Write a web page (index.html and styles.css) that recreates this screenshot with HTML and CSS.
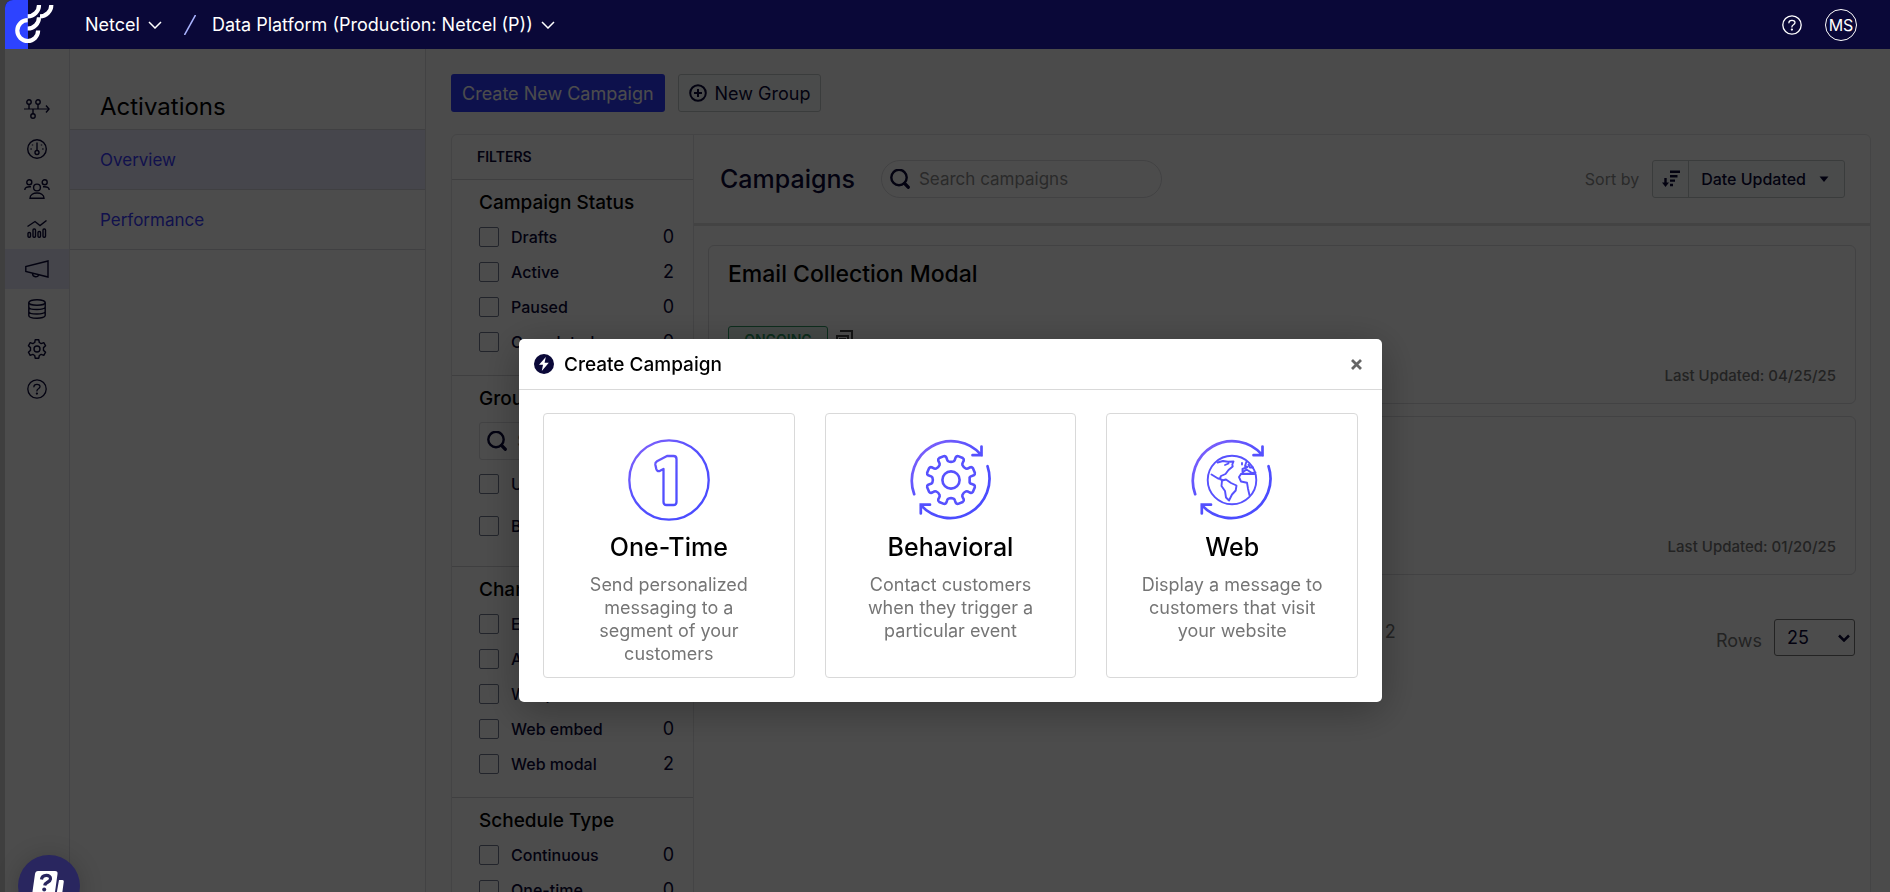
FILE: index.html
```
<!DOCTYPE html>
<html lang="en">
<head>
<meta charset="utf-8">
<title>Campaigns</title>
<link rel="stylesheet" href="styles.css">
</head>
<body>
<svg class="defs" aria-hidden="true">
  <defs>
    <linearGradient id="violet" gradientUnits="userSpaceOnUse" x1="8" y1="8" x2="58" y2="66"><stop offset="0" stop-color="#7d60fb"/><stop offset=".5" stop-color="#5751fe"/><stop offset="1" stop-color="#4b4cff"/></linearGradient>
    <symbol id="search" viewBox="0 0 20 20"><g fill="none" stroke="currentColor" stroke-linecap="round"><circle cx="9" cy="8.500" r="7.700" stroke-width="2.400"/><path d="M14.800 14.600l3.400 3.600" stroke-width="3.400"/></g></symbol>
    <symbol id="help" viewBox="0 0 20 20"><g fill="none" stroke="currentColor" stroke-width="1.300" stroke-linecap="round" stroke-linejoin="round"><circle cx="10" cy="10" r="9.200"/><path d="M6.900 7.800C6.900 4.600 13 4.500 13 7.600c0 2.300-3.100 1.900-3.100 4.300"/><circle cx="9.900" cy="14.600" r=".5"/></g></symbol>
    <symbol id="cycle" viewBox="0 0 82 82"><g fill="none" stroke="url(#violet)" stroke-width="2.700" stroke-linecap="round" stroke-linejoin="miter"><path d="M4.200 55.200A39.500 39.500 0 0 1 71.500 16.200M71.500 7.500v8.700H62.500"/><path d="M77.500 27.200A39.500 39.500 0 0 1 10.800 66.200M10.800 74.500v-8.800H20"/></g></symbol>
  </defs>
</svg>

<div class="app">
  <header class="topbar">
    <a class="logo" href="#" aria-label="Home">
      <svg width="49" height="49" viewBox="0 0 49 49"><path fill="#2d43ff" d="M0 0h23v49H0z"/><g fill="none" stroke="#fff" stroke-width="4.200"><path d="M34 5A11.300 11.300 0 0 1 22.700 16.300M46.300 5A11.300 11.300 0 0 1 35 16.300M34 17.200A11.300 11.300 0 0 1 22.700 28.500"/><path d="M22.700 20.200A10.400 10.400 0 1 0 33.100 30.600"/></g></svg>
    </a>
    <button class="crumb" type="button">Netcel <svg width="14" height="8" viewBox="0 0 14 8"><path d="M1 1l6 6 6-6"/></svg></button>
    <svg class="slash" width="12" height="20" viewBox="0 0 12 20"><path d="M11.500 0L.5 20"/></svg>
    <button class="crumb" type="button">Data Platform (Production: Netcel (P)) <svg width="14" height="8" viewBox="0 0 14 8"><path d="M1 1l6 6 6-6"/></svg></button>
    <button class="top-help" type="button" aria-label="Help"><svg width="20" height="20"><use href="#help"/></svg></button>
    <button class="avatar" type="button">MS</button>
  </header>

  <div class="body">
    <nav class="rail" aria-label="Main">
      <a href="#" aria-label="Journeys"><svg width="26" height="20" viewBox="0 0 26 20"><path d="M0 10h25" stroke-width="1"/><path d="M22 6.500l3 3.500-3 3.500M5 5v5M14 5v5M9 10v5"/><circle cx="5" cy="3" r="2.200"/><circle cx="14" cy="3" r="2.200"/><circle cx="9" cy="17" r="2.200"/></svg></a>
      <a href="#" aria-label="Dashboard"><svg width="20" height="20" viewBox="0 0 20 20"><circle cx="10" cy="10" r="9.300"/><path d="M10 3.500v8M5.500 5.500v1M14.500 5.500v1M3.500 10h1.200M15.300 10h1.200"/><circle cx="10" cy="13.500" r="2"/></svg></a>
      <a href="#" aria-label="Customers"><svg width="26" height="20" viewBox="0 0 26 20"><circle cx="13" cy="8.500" r="3.400"/><circle cx="5.300" cy="3.300" r="2.500"/><circle cx="20.700" cy="3.300" r="2.500"/><path d="M6 19.200c0-7 14-7 14 0zM.8 11c0-2.500 2-3.500 6.200-3.200M25.200 11c0-2.500-2-3.500-6.200-3.200"/></svg></a>
      <a href="#" aria-label="Insights"><svg width="20" height="18" viewBox="0 0 20 18"><path d="M.5 6.500L8 1.500l5 4L19.500.5"/><rect x="1" y="12.500" width="2.500" height="4.800" rx="1"/><rect x="6" y="9" width="2.500" height="8.300" rx="1"/><rect x="11" y="11.500" width="2.500" height="5.800" rx="1"/><rect x="16" y="9" width="2.500" height="8.300" rx="1"/></svg></a>
      <a class="is-active" href="#" aria-label="Activations"><svg width="24" height="18" viewBox="0 0 24 18"><path d="M.8 6.500v5L23 17V1zM7.500 13.500c0 4 5.800 4 6 1.500"/></svg></a>
      <a href="#" aria-label="Data"><svg width="18" height="20" viewBox="0 0 18 20"><ellipse cx="9" cy="3.500" rx="8.200" ry="2.800"/><path d="M.8 3.500v13c0 3.600 16.400 3.600 16.400 0v-13M.8 8c0 3.400 16.400 3.400 16.400 0M.8 12.500c0 3.400 16.400 3.400 16.400 0"/></svg></a>
      <a href="#" aria-label="Settings"><svg width="20" height="20" viewBox="0 0 20 20"><circle cx="10" cy="10" r="3"/><path stroke-linejoin="round" d="M8.200.8h3.600l.5 2.700 1.900 1.100 2.600-.9 1.800 3.100-2.100 1.800v2.800l2.100 1.800-1.800 3.100-2.600-.9-1.900 1.100-.5 2.700H8.200l-.5-2.700-1.900-1.100-2.600.9-1.800-3.100 2.100-1.800V8.600L1.400 6.800l1.800-3.100 2.600.9 1.900-1.100z"/></svg></a>
      <a href="#" aria-label="Support"><svg width="20" height="20"><use href="#help"/></svg></a>
    </nav>

    <aside class="subnav">
      <h1>Activations</h1>
      <a class="is-active" href="#">Overview</a>
      <a href="#">Performance</a>
    </aside>

    <main class="content">
      <div class="actions">
        <button class="btn-primary" type="button">Create New Campaign</button>
        <button class="btn" type="button"><svg width="18" height="18" viewBox="0 0 18 18"><g fill="none" stroke="currentColor" stroke-width="2"><circle cx="9" cy="9" r="7.800"/><path d="M9 5v8M5 9h8"/></g></svg>New Group</button>
      </div>
      <div class="board">
        <div class="filters">
          <h2>FILTERS</h2>
          <section>
            <h3>Campaign Status</h3>
            <label><input type="checkbox"><span>Drafts</span><b>0</b></label>
            <label><input type="checkbox"><span>Active</span><b>2</b></label>
            <label><input type="checkbox"><span>Paused</span><b>0</b></label>
            <label><input type="checkbox"><span>Completed</span><b>0</b></label>
          </section>
          <section class="groups">
            <h3>Groups</h3>
            <div class="group-search"><svg width="20" height="20"><use href="#search"/></svg><input type="search" placeholder="Search groups" aria-label="Search groups"></div>
            <label><input type="checkbox"><span>Ungrouped</span><b>2</b></label>
            <label><input type="checkbox"><span>B2B</span><b>0</b></label>
          </section>
          <section>
            <h3>Channel</h3>
            <label><input type="checkbox"><span>Email</span><b>0</b></label>
            <label><input type="checkbox"><span>API</span><b>0</b></label>
            <label><input type="checkbox"><span>Webpush</span><b>0</b></label>
            <label><input type="checkbox"><span>Web embed</span><b>0</b></label>
            <label><input type="checkbox"><span>Web modal</span><b>2</b></label>
          </section>
          <section>
            <h3>Schedule Type</h3>
            <label><input type="checkbox"><span>Continuous</span><b>0</b></label>
            <label><input type="checkbox"><span>One-time</span><b>0</b></label>
          </section>
        </div>
        <div class="campaigns">
          <div class="toolbar">
            <h2>Campaigns</h2>
            <div class="search"><svg width="20" height="20"><use href="#search"/></svg><input type="search" placeholder="Search campaigns" aria-label="Search campaigns"></div>
            <span class="sort-label">Sort by</span>
            <div class="sort">
              <button type="button" aria-label="Sort descending"><svg width="18" height="18" viewBox="0 0 18 18"><g fill="none" stroke="currentColor" stroke-width="2.400"><path d="M3.500 8v7M8 1.800h10M8 6.200h7.500M8 10.600h5M8 15h3"/></g><path fill="currentColor" d="M0 12.500h7L3.500 17z"/></svg></button>
              <button type="button">Date Updated <svg width="10" height="6" viewBox="0 0 10 6"><path fill="currentColor" d="M.5.500h9L5 6z"/></svg></button>
            </div>
          </div>
          <div class="list">
            <article>
              <h3>Email Collection Modal</h3>
              <div class="state"><span class="badge">ONGOING</span><svg width="18" height="18" viewBox="0 0 18 18"><g fill="none" stroke="currentColor" stroke-width="2"><path d="M4 1h12v12M1 6h11v11H1z"/><path d="M3 9h7"/></g></svg></div>
              <p>Last Updated: 04/25/25</p>
            </article>
            <article>
              <h3>Welcome Modal</h3>
              <p>Last Updated: 01/20/25</p>
            </article>
            <footer class="pager">
              <span class="range">Showing 1 - 2 of 2</span>
              <label for="rows">Rows</label>
              <div class="rows"><select id="rows"><option>25</option></select><svg width="12" height="8" viewBox="0 0 12 8"><path d="M1 1.500l5 5 5-5"/></svg></div>
            </footer>
          </div>
        </div>
      </div>
    </main>
  </div>
</div>

<div class="overlay">
  <div class="modal" role="dialog" aria-labelledby="modal-title">
    <div class="modal-head">
      <svg width="20" height="20" viewBox="0 0 20 20"><circle cx="10" cy="10" r="10" fill="#0a0838"/><path fill="#fff" d="M11.800 3L5 10.800h4L7.800 17l7-8.200h-4.200z"/></svg>
      <h2 id="modal-title">Create Campaign</h2>
      <button type="button" aria-label="Close"><svg width="11" height="11" viewBox="0 0 11 11"><path d="M1 1l9 9M10 1l-9 9" stroke="#666" stroke-width="2.800"/></svg></button>
    </div>
    <div class="choices">
      <button type="button">
        <svg width="82" height="82" viewBox="0 0 82 82" fill="none" stroke="url(#violet)" stroke-width="2.300"><circle cx="41" cy="41" r="39.700"/><path stroke-linejoin="round" d="M39 17h6.500q3 0 3 3v43q0 3-3 3h-7q-3 0-3-3V30l-3.500 1.800q-3 1-3.700-1.800l-1-4.500q-.3-2 1.700-3.200z"/></svg>
        <strong>One-Time</strong>
        <span>Send personalized messaging to a segment of your customers</span>
      </button>
      <button type="button">
        <svg width="82" height="82" viewBox="0 0 82 82"><use href="#cycle"/><g fill="none" stroke="#5751fe" stroke-width="2.600" stroke-linejoin="round"><circle cx="41" cy="41" r="8.600"/><path id="cog" d=""/></g></svg>
        <strong>Behavioral</strong>
        <span>Contact customers when they trigger a particular event</span>
      </button>
      <button type="button">
        <svg width="82" height="82" viewBox="0 0 82 82"><use href="#cycle"/><g fill="none" stroke="#5751fe" stroke-width="1.900" stroke-linejoin="round" stroke-linecap="round"><circle cx="41" cy="41" r="24.300"/><path d="M26.500 23.500l5.500-1.500 5 .8 5.500-.3-1.200 3 .4 2-4.200 3.500-3 4-4.500 2-1.300 3 2.500 1M20.500 35.500l6.500 4 2.700.5 1.300 1.500M34 26l3.500-1.500"/><path d="M31 41.500l4-1 5 3.500 5.500 2.500-.8 5-3.700 4-3 6-3-3-1-6.500-3.500-5z"/><path d="M51 24v1.500M55.500 22.500l-1.500 4.500 2.500 1-5 2v3.500l4-3 5.500 3.500 3.500-.5M50 35l7-.3 6.500.3M50 35l-2 3 2 4.500 6 1.200 1 6 1.500 6.500M57.500 25.500l1.500 3h3"/></g></svg>
        <strong>Web</strong>
        <span>Display a message to customers that visit your website</span>
      </button>
    </div>
  </div>
</div>

<button class="chat" type="button" aria-label="Support chat"><svg width="34" height="34" viewBox="0 0 34 34"><path fill="#fff" d="M6 1h17q3 0 2.500 3L23 22q-.5 3-3.500 3H4q-4 0-3.500-3.500L3 4q.5-3 3-3zM27 10h3.500q1.500 0 1.300 1.500L29 32l-8-5h3z"/><path d="M9.500 9.500C10 4 19 4 18.500 9c-.4 3.500-5.500 3-5.800 6.500" fill="none" stroke="#29265f" stroke-width="3.200"/><circle cx="12.200" cy="19.500" r="2" fill="#29265f"/></svg></button>
<script src="icons.js"></script>
</body>
</html>
```
FILE: icons.js
```
// Eight-toothed cog outline with rounded shoulders.
const teeth = 8;
const step = (Math.PI * 2) / teeth;
const at = (radius, angle) =>
  `${(41 + radius * Math.cos(angle)).toFixed(2)} ${(41 + radius * Math.sin(angle)).toFixed(2)}`;
let outline = "";
for (let i = 0; i < teeth; i++) {
  const a = (i + 0.5) * step;
  outline += `${i ? "Q" + at(17.6, a - step / 2) + " " : "M"}${at(18.8, a - 0.26)}Q${at(19.8, a - 0.2)} ${at(21.2, a - 0.2)}`;
  outline += `L${at(23.2, a - 0.19)}Q${at(24.8, a - 0.17)} ${at(24.9, a - 0.1)}`;
  outline += `L${at(24.9, a + 0.1)}Q${at(24.8, a + 0.17)} ${at(23.2, a + 0.19)}`;
  outline += `L${at(21.2, a + 0.2)}Q${at(19.8, a + 0.2)} ${at(18.8, a + 0.26)}`;
}
document.getElementById("cog").setAttribute("d", outline + "Z");
```
FILE: styles.css
```
* { box-sizing: border-box; }
body { margin: 0; height: 100vh; overflow: hidden; background: #0a0838; font-family: Inter, "Liberation Sans", sans-serif; color: #0a0838; }
h1, h2, h3, p { margin: 0; font-weight: 500; }
a { text-decoration: none; }
button { font: inherit; color: inherit; padding: 0; background: none; border: 0; }
.defs { position: absolute; width: 0; height: 0; }

.app { display: flex; flex-direction: column; height: 100vh; border-left: 5px solid #3f3f3f; background: #3f3f3f; }
.topbar { display: flex; align-items: center; flex: none; height: 49px; padding-right: 33px; background: #0a0838; color: #fff; border-radius: 8px 0 0 0; overflow: hidden; }
.logo { display: flex; margin-right: 31px; }
.crumb { display: flex; align-items: center; gap: 8px; font-size: 18px; }
.crumb path { fill: none; stroke: #fff; stroke-width: 1.5; }
.slash { margin: 0 16px 0 22px; }
.slash path { stroke: #aab4ff; stroke-width: 1.5; }
.top-help { display: flex; margin-left: auto; }
.avatar { width: 32px; height: 32px; margin-left: 23px; border: 1px solid #fff; border-radius: 50%; font-size: 16px; }

.body { display: flex; flex: 1; min-height: 0; background: #fff; }
.rail { flex: none; width: 65px; padding-top: 40px; border-right: 1px solid #e2e2e6; }
.rail a { display: flex; align-items: center; justify-content: center; height: 40px; color: #0a0838; }
.rail a.is-active { background: #e6e8fa; }
.rail svg { fill: none; stroke: currentColor; stroke-width: 1.4; }
.subnav { flex: none; width: 356px; border-right: 1px solid #dddde2; }
.subnav h1 { padding: 41px 30px 6px; font-size: 24px; line-height: 33px; font-weight: 400; color: #000; }
.subnav a { display: flex; align-items: center; height: 60px; padding: 0 30px; border-top: 1px solid #d5d5dc; font-size: 17px; color: #3a3bff; }
.subnav a:last-child { height: 61px; border-bottom: 1px solid #d5d5dc; }
.subnav a.is-active { background: #ebe9ff; }

.content { flex: 1; min-width: 0; padding: 25px 19px 0 25px; background: #fcfcfc; }
.actions { display: flex; gap: 13px; height: 38px; margin-bottom: 22px; font-size: 18px; }
.btn-primary { padding: 0 11px; border-radius: 3px; background: #2d3aff; color: #fff; }
.btn { display: flex; align-items: center; gap: 8px; padding: 0 10px; border: 1px solid #c4c9c9; border-radius: 3px; background: #f8fcfc; }
.board { display: flex; border: 1px solid #e4e4e6; border-radius: 6px; background: #fff; }

.filters { flex: none; width: 242px; border-right: 1px solid #e4e4e6; }
.filters h2 { padding: 0 25px; font-size: 14px; line-height: 44px; font-weight: 600; }
.filters section { padding: 11px 19px 16px 27px; border-top: 1px solid #d2d2d6; }
.filters h3 { margin-bottom: 4px; font-size: 19px; line-height: 24px; color: #000; }
.filters label { display: flex; align-items: center; height: 35px; font-size: 16px; font-weight: 500; }
.filters label span { flex: 1; margin-left: 12px; }
.filters b { font-size: 18px; font-weight: 400; }
.filters input[type="checkbox"] { appearance: none; width: 20px; height: 20px; margin: 0; border: 1px solid #747b90; border-radius: 2px; }
.groups.groups { padding-bottom: 19px; }
.groups h3 { margin-bottom: 11px; }
.groups label { height: 42px; }
.group-search { display: flex; align-items: center; gap: 10px; height: 38px; margin-bottom: 3px; padding-left: 7px; border: 1px solid #dcdce0; border-radius: 3px; }
input[type="search"] { flex: 1; min-width: 0; padding: 0; border: 0; outline: 0; background: none; font: inherit; font-size: 17px; }
input::placeholder { color: #8e8e8e; }

.campaigns { flex: 1; min-width: 0; }
.toolbar { display: flex; align-items: center; height: 91px; padding: 0 25px 0 26px; border-bottom: 3px solid #e0e0e0; }
.toolbar h2 { font-size: 25px; line-height: 32px; }
.search { display: flex; align-items: center; gap: 9px; width: 281px; height: 38px; margin-left: 26px; padding: 0 16px 0 8px; border: 1px solid #dcdce0; border-radius: 19px; }
.sort-label { margin-left: auto; margin-right: 13px; font-size: 16px; color: #8e8e8e; }
.sort { display: flex; height: 38px; border: 1px solid #c4c9c9; border-radius: 3px; background: #f8fcfc; font-size: 16px; font-weight: 500; }
.sort button { display: flex; align-items: center; justify-content: center; gap: 13px; padding: 0 15px 0 12px; }
.sort button:first-child { width: 36px; padding: 0; border-right: 1px solid #c4c9c9; }
.list { padding: 19px 14px 0; }
.list article { display: flex; flex-direction: column; height: 159px; margin-bottom: 12px; padding: 14px 19px 18px; border: 1px solid #dcdce0; border-radius: 6px; }
.list h3 { font-size: 23px; line-height: 28px; color: #000; }
.state { display: flex; gap: 8px; margin-top: 38px; }
.state svg { margin-top: 4px; color: #444; }
.badge { width: 100px; height: 27px; border: 1px solid #2f9a64; border-radius: 3px; background: #e4f5ec; color: #2f9a64; font-size: 14px; line-height: 25px; font-weight: 600; text-align: center; }
.list p { margin-top: auto; font-size: 15px; line-height: 18px; color: #757575; text-align: right; }
.pager { display: flex; align-items: flex-start; margin-top: 44px; padding-right: 1px; font-size: 18px; line-height: 26px; color: #757575; }
.range { flex: 1; padding-left: 534px; }
.pager label { padding-top: 9px; margin-right: 12px; }
.rows { display: flex; align-items: center; position: relative; }
.rows select { appearance: none; width: 81px; height: 37px; padding: 0 12px; border: 1px solid #757575; border-radius: 3px; background: #fff; color: #0a0838; font: inherit; }
.rows svg { position: absolute; right: 5px; }
.rows path { fill: none; stroke: #0a0838; stroke-width: 2.5; }

.overlay { position: fixed; inset: 49px 0 0 5px; display: flex; align-items: center; justify-content: center; padding: 100px 0 0 6px; background: rgba(0, 0, 0, .7); }
.modal { width: 863px; background: #fff; border-radius: 5px; box-shadow: 0 8px 40px rgba(0, 0, 0, .3); }
.modal-head { display: flex; align-items: center; gap: 10px; height: 51px; padding: 0 20px 0 15px; border-bottom: 1px solid #d9d9d9; color: #000; }
.modal-head h2 { flex: 1; font-size: 19px; }
.modal-head button { display: flex; }
.choices { display: flex; gap: 30px; padding: 23px 24px 24px; }
.choices button { flex: 1 1 0; display: flex; flex-direction: column; align-items: center; height: 265px; padding: 25px 32px 0; border: 1px solid #d9d9d9; border-radius: 4px; }
.choices strong { margin: 10px 0 10px; font-size: 25px; line-height: 32px; font-weight: 500; color: #000; }
.choices span { font-size: 18px; line-height: 23px; color: #757575; }

.chat { position: fixed; left: 18px; bottom: -25px; display: flex; justify-content: center; width: 62px; height: 62px; padding-top: 15px; border-radius: 50%; background: #29265f; box-shadow: 0 2px 24px rgba(0, 0, 0, .2); }
```
